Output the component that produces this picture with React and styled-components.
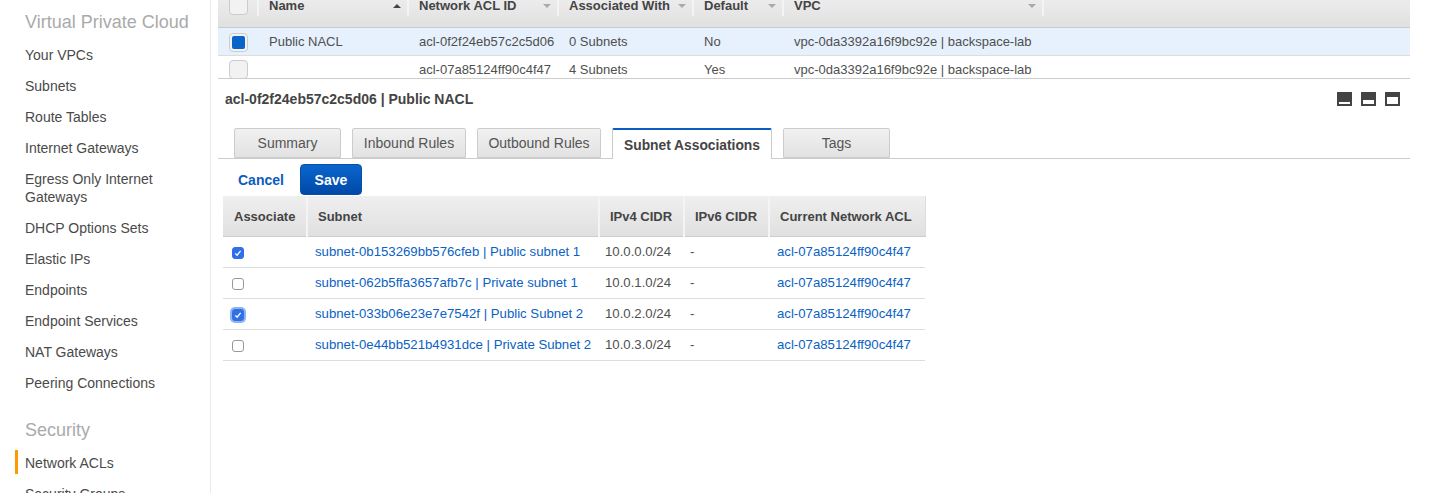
import React from "react";
import styled, { createGlobalStyle } from "styled-components";

const GlobalStyle = createGlobalStyle`
  html, body {
    margin: 0;
    padding: 0;
    height: 100%;
    overflow: hidden;
    background: #fff;
  }
  body {
    font-family: "Liberation Sans", Arial, sans-serif;
    font-size: 13px;
    color: #444;
  }
`;

const Page = styled.div`
  display: flex;
  width: 1440px;
  height: 493px;
  overflow: hidden;
`;

const Sidebar = styled.nav`
  flex: none;
  box-sizing: border-box;
  width: 211px;
  border-right: 1px solid #eaeaea;
  padding: 11px 0 0 25px;
`;

const NavHeading = styled.div`
  font-size: 18px;
  line-height: 22px;
  color: #aaa;
  margin: ${(p) => (p.$spaced ? "21px" : "0")} 0 6px;
`;

const NavItem = styled.div`
  position: relative;
  width: 150px;
  font-size: 14px;
  line-height: 18px;
  padding: 6.5px 0;
  color: #4a4a4a;

  ${(p) =>
    p.$active &&
    `
    &::before {
      content: "";
      position: absolute;
      left: -10px;
      top: 3px;
      width: 3px;
      height: 24px;
      background: #f90;
    }
  `}
`;

const Main = styled.main`
  flex: none;
  width: 1192px;
  margin-left: 7px;
`;

const GridWrap = styled.div`
  height: 78px;
  border-bottom: 1px solid #ccc;
  overflow: hidden;
`;

const GridHeader = styled.div`
  display: flex;
  height: 27px;
  border-bottom: 1px solid #ccc;
  background: linear-gradient(#ececec, #e0e0e0);
`;

const GridRow = styled.div`
  display: flex;
  align-items: ${(p) => (p.$clipped ? "flex-start" : "center")};
  height: ${(p) => (p.$clipped ? "22px" : "27px")};
  border-bottom: ${(p) => (p.$clipped ? "0" : "1px solid #ddd")};
  background: ${(p) => (p.$selected ? "#e6f1fd" : "#fff")};
  padding-top: ${(p) => (p.$clipped ? "6px" : "0")};
  box-sizing: content-box;
`;

const HeadCell = styled.div`
  position: relative;
  flex: none;
  box-sizing: border-box;
  width: ${(p) => p.$w}px;
  height: 16px;
  padding-left: 10px;
  font-size: 13px;
  font-weight: bold;
  line-height: 12px;
  color: #444;
  border-right: 2px solid #f4f4f4;
`;

const Caret = styled.span`
  position: absolute;
  right: 6px;
  top: 4px;
  width: 0;
  height: 0;
  border-left: 4px solid transparent;
  border-right: 4px solid transparent;
  ${(p) =>
    p.$up
      ? "border-bottom: 4px solid #444;"
      : "border-top: 4px solid #aaa;"}
`;

const Cell = styled.div`
  flex: none;
  box-sizing: border-box;
  width: ${(p) => p.$w}px;
  padding-left: 10px;
  font-size: 13px;
  line-height: 16px;
  color: #4f4f4f;
  white-space: nowrap;
`;

const CheckCell = styled.div`
  flex: none;
  display: flex;
  justify-content: flex-start;
  width: 41px;
  height: ${(p) => (p.$head ? "16px" : "auto")};
  padding-left: 11px;
  box-sizing: border-box;
  border-right: ${(p) => (p.$head ? "2px solid #f4f4f4" : "0")};
`;

const SelectBox = styled.span`
  display: flex;
  align-items: center;
  justify-content: center;
  box-sizing: border-box;
  width: 19px;
  height: 19px;
  border: 1px solid #ccc;
  border-radius: 4px;
  background: #f2f2f2;
  margin-top: ${(p) => p.$top}px;

  &::after {
    content: "";
    display: ${(p) => (p.$on ? "block" : "none")};
    width: 13px;
    height: 13px;
    border-radius: 2px;
    background: #0a63c9;
  }
`;

const TitleBar = styled.div`
  display: flex;
  align-items: center;
  justify-content: space-between;
  height: 40px;
  padding: 0 10px 0 7px;
`;

const Title = styled.h2`
  margin: 0;
  font-size: 14px;
  font-weight: bold;
  color: #444;
`;

const PaneIcons = styled.div`
  display: flex;
  gap: 9px;
`;

const PaneIcon = styled.svg`
  display: block;
  width: 15px;
  height: 14px;
`;

const Tabs = styled.div`
  display: flex;
  align-items: flex-end;
  gap: 11px;
  height: 30px;
  margin-top: 9px;
  padding-left: 16px;
  border-bottom: 1px solid #ccc;
`;

const Tab = styled.div`
  box-sizing: border-box;
  width: ${(p) => p.$w}px;
  height: ${(p) => (p.$active ? "31px" : "30px")};
  margin-bottom: ${(p) => (p.$active ? "-1px" : "0")};
  padding-top: ${(p) => (p.$active ? "2px" : "0")};
  text-align: center;
  font-size: ${(p) => (p.$active ? "13.8px" : "14px")};
  line-height: 28px;
  font-weight: ${(p) => (p.$active ? "bold" : "normal")};
  color: ${(p) => (p.$active ? "#444" : "#555")};
  background: ${(p) => (p.$active ? "#fff" : "linear-gradient(#f1f1f1, #e2e2e2)")};
  border: 1px solid #ccc;
  border-top: ${(p) => (p.$active ? "2px solid #0a5cc0" : "1px solid #ccc")};
  border-bottom: ${(p) => (p.$active ? "0" : "1px solid #ccc")};
  border-radius: 2px 2px 0 0;
`;

const Actions = styled.div`
  display: flex;
  align-items: center;
  height: 31px;
  margin-top: 5px;
  padding-left: 20px;
`;

const CancelLink = styled.a`
  font-size: 14px;
  font-weight: bold;
  color: #0a5cc0;
  margin-right: 16px;
`;

const SaveButton = styled.button`
  width: 62px;
  height: 31px;
  padding: 0;
  border: 1px solid #0a4ea6;
  border-radius: 4px;
  background: linear-gradient(#0a66cc, #0049a8);
  color: #fff;
  font-family: inherit;
  font-size: 14px;
  font-weight: bold;
`;

const Table = styled.table`
  margin: 1px 0 0 5px;
  width: 702px;
  table-layout: fixed;
  border-collapse: collapse;
`;

const Th = styled.th`
  box-sizing: border-box;
  width: ${(p) => p.$w}px;
  height: 40px;
  padding: 1px 0 0 ${(p) => p.$pad ?? 10}px;
  text-align: left;
  font-size: 13px;
  font-weight: bold;
  color: #444;
  background: linear-gradient(#efefef, #e0e0e0);
  border-bottom: 1px solid #ccc;
  border-right: 2px solid #f4f4f4;
  white-space: nowrap;

  &:last-child {
    border-right: 1px solid #ddd;
  }
`;

const Td = styled.td`
  height: 30px;
  padding: 0 0 0 ${(p) => p.$pad ?? 6}px;
  font-size: 13.2px;
  color: #4f4f4f;
  border-bottom: 1px solid #ddd;
  white-space: nowrap;
`;

const RowLink = styled.a`
  color: #0a62c4;
`;

const Check = styled.span`
  display: flex;
  align-items: center;
  justify-content: center;
  box-sizing: border-box;
  width: 12px;
  height: 12px;
  margin-top: 2px;
  border-radius: 3px;
  border: 1px solid ${(p) => (p.$on ? "#2f6fe8" : "#999")};
  background: ${(p) => (p.$on ? "#2f6fe8" : "#fff")};
  box-shadow: ${(p) => (p.$focus ? "0 0 0 2px #8db4f0" : "none")};
`;

const navTop = [
  "Your VPCs",
  "Subnets",
  "Route Tables",
  "Internet Gateways",
  "Egress Only Internet Gateways",
  "DHCP Options Sets",
  "Elastic IPs",
  "Endpoints",
  "Endpoint Services",
  "NAT Gateways",
  "Peering Connections",
];

const subnets = [
  { id: "subnet-0b153269bb576cfeb | Public subnet 1", cidr: "10.0.0.0/24", on: true },
  { id: "subnet-062b5ffa3657afb7c | Private subnet 1", cidr: "10.0.1.0/24" },
  { id: "subnet-033b06e23e7e7542f | Public Subnet 2", cidr: "10.0.2.0/24", on: true, focus: true },
  { id: "subnet-0e44bb521b4931dce | Private Subnet 2", cidr: "10.0.3.0/24" },
];

const tabs = [
  { label: "Summary", w: 107 },
  { label: "Inbound Rules", w: 114 },
  { label: "Outbound Rules", w: 124 },
  { label: "Subnet Associations", w: 160, active: true },
  { label: "Tags", w: 107 },
];

const PaneGlyph = ({ h }) => (
  <PaneIcon viewBox="0 0 15 14">
    <rect width="15" height="14" fill="#444" />
    <rect x="2" y={12 - h} width="11" height={h} fill="#fff" />
  </PaneIcon>
);

const App = () => (
  <Page>
    <GlobalStyle />
    <Sidebar>
      <NavHeading>Virtual Private Cloud</NavHeading>
      {navTop.map((item) => (
        <NavItem key={item}>{item}</NavItem>
      ))}
      <NavHeading $spaced>Security</NavHeading>
      <NavItem $active>Network ACLs</NavItem>
      <NavItem>Security Groups</NavItem>
    </Sidebar>
    <Main>
      <GridWrap>
        <GridHeader>
          <CheckCell $head>
            <SelectBox $top={-4} />
          </CheckCell>
          <HeadCell $w={150}>
            Name
            <Caret $up />
          </HeadCell>
          <HeadCell $w={150}>
            Network ACL ID
            <Caret />
          </HeadCell>
          <HeadCell $w={135}>
            Associated With
            <Caret />
          </HeadCell>
          <HeadCell $w={90}>
            Default
            <Caret />
          </HeadCell>
          <HeadCell $w={260}>
            VPC
            <Caret />
          </HeadCell>
        </GridHeader>
        <GridRow $selected>
          <CheckCell>
            <SelectBox $on $top={1} />
          </CheckCell>
          <Cell $w={150}>Public NACL</Cell>
          <Cell $w={150}>acl-0f2f24eb57c2c5d06</Cell>
          <Cell $w={135}>0 Subnets</Cell>
          <Cell $w={90}>No</Cell>
          <Cell $w={300}>vpc-0da3392a16f9bc92e | backspace-lab</Cell>
        </GridRow>
        <GridRow $clipped>
          <CheckCell>
            <SelectBox $top={-2} />
          </CheckCell>
          <Cell $w={150} />
          <Cell $w={150}>acl-07a85124ff90c4f47</Cell>
          <Cell $w={135}>4 Subnets</Cell>
          <Cell $w={90}>Yes</Cell>
          <Cell $w={300}>vpc-0da3392a16f9bc92e | backspace-lab</Cell>
        </GridRow>
      </GridWrap>
      <TitleBar>
        <Title>acl-0f2f24eb57c2c5d06 | Public NACL</Title>
        <PaneIcons>
          <PaneGlyph h={2} />
          <PaneGlyph h={4} />
          <PaneGlyph h={7} />
        </PaneIcons>
      </TitleBar>
      <Tabs>
        {tabs.map((tab) => (
          <Tab key={tab.label} $w={tab.w} $active={tab.active}>
            {tab.label}
          </Tab>
        ))}
      </Tabs>
      <Actions>
        <CancelLink>Cancel</CancelLink>
        <SaveButton>Save</SaveButton>
      </Actions>
      <Table>
        <thead>
          <tr>
            <Th $w={84} $pad={11}>Associate</Th>
            <Th $w={292}>Subnet</Th>
            <Th $w={85}>IPv4 CIDR</Th>
            <Th $w={85}>IPv6 CIDR</Th>
            <Th $w={156}>Current Network ACL</Th>
          </tr>
        </thead>
        <tbody>
          {subnets.map((row) => (
            <tr key={row.id}>
              <Td $pad={9}>
                <Check $on={row.on} $focus={row.focus}>
                  {row.on && (
                    <svg width="8" height="8" viewBox="0 0 8 8">
                      <path d="M1.2 4.4 L3.1 6.2 L6.6 1.8" fill="none" stroke="#fff" strokeWidth="1.3" />
                    </svg>
                  )}
                </Check>
              </Td>
              <Td $pad={8}>
                <RowLink>{row.id}</RowLink>
              </Td>
              <Td>{row.cidr}</Td>
              <Td>-</Td>
              <Td $pad={8}>
                <RowLink>acl-07a85124ff90c4f47</RowLink>
              </Td>
            </tr>
          ))}
        </tbody>
      </Table>
    </Main>
  </Page>
);

export default App;
